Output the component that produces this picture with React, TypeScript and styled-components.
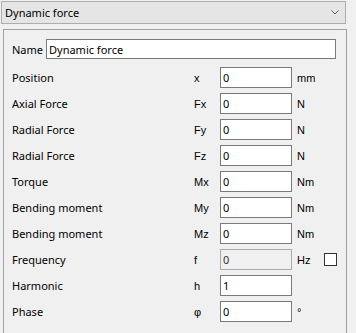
import React from "react";
import styled, { createGlobalStyle } from "styled-components";

const GlobalStyle = createGlobalStyle`
  html, body {
    margin: 0;
    padding: 0;
    background: #f0f0f0;
  }
  body {
    font-family: "Noto Sans", "Liberation Sans", sans-serif;
    font-size: 11px;
    color: #000;
  }
`;

const Page = styled.div`
  width: 356px;
  height: 333px;
  overflow: hidden;
  padding: 1px 0 0 1px;
  box-sizing: border-box;
`;

const Combo = styled.div`
  width: 345px;
  height: 23px;
  box-sizing: border-box;
  border: 1px solid #adadad;
  background: #e5e5e5;
  display: flex;
  align-items: center;
  justify-content: space-between;
  padding: 0 6px 0 3px;
`;

const Panel = styled.div`
  margin: 5px 0 0 2px;
  width: 344px;
  height: 320px;
  box-sizing: border-box;
  border: 1px solid #a0a0a0;
  padding: 9px 9px 0 8px;
`;

const NameRow = styled.div`
  display: flex;
  align-items: center;
  margin-bottom: 8px;
`;

const NameLabel = styled.span`
  width: 34px;
`;

const Field = styled.input<{ $w: number }>`
  width: ${(p) => p.$w}px;
  height: ${(p) => (p.$w > 100 ? 20 : 21)}px;
  box-sizing: border-box;
  border: 1px solid #7a7a7a;
  background: #fff;
  font-family: "Noto Sans", "Liberation Sans", sans-serif;
  font-size: 11px;
  color: #000;
  padding: 0 2px;
  margin: 0;
  outline: none;
  &:disabled {
    background: #f0f0f0;
    border-color: #a9a9a9;
    color: #333;
  }
`;

const Grid = styled.div`
  display: grid;
  grid-template-columns: 182px 26px 72px 5px 27px 13px;
  grid-auto-rows: 21px;
  row-gap: 5px;
  align-items: center;
`;

const Label = styled.span`
  grid-column: 1;
`;

const Sym = styled.span`
  grid-column: 2;
  font-family: "Liberation Sans", Arial, sans-serif;
  font-size: 11px;
`;

const Unit = styled.span`
  grid-column: 5;
  font-family: "Liberation Sans", Arial, sans-serif;
  font-size: 11px;
`;

const Check = styled.span`
  grid-column: 6;
  width: 13px;
  height: 13px;
  box-sizing: border-box;
  border: 1px solid #333;
  background: #fff;
`;

const Chevron = () => (
  <svg width="8" height="5" viewBox="0 0 8 5">
    <path d="M0.5 0.5 L4 4 L7.5 0.5" fill="none" stroke="#606060" strokeWidth="1" />
  </svg>
);

const rows = [
  { label: "Position", sym: "x", value: "0", unit: "mm" },
  { label: "Axial Force", sym: "Fx", value: "0", unit: "N" },
  { label: "Radial Force", sym: "Fy", value: "0", unit: "N" },
  { label: "Radial Force", sym: "Fz", value: "0", unit: "N" },
  { label: "Torque", sym: "Mx", value: "0", unit: "Nm" },
  { label: "Bending moment", sym: "My", value: "0", unit: "Nm" },
  { label: "Bending moment", sym: "Mz", value: "0", unit: "Nm" },
  { label: "Frequency", sym: "f", value: "0", unit: "Hz", disabled: true, check: true },
  { label: "Harmonic", sym: "h", value: "1", unit: "" },
  { label: "Phase", sym: "φ", value: "0", unit: "°" },
];

const App = () => {
  return (
    <Page>
      <GlobalStyle />
      <Combo>
        <span>Dynamic force</span>
        <Chevron />
      </Combo>
      <Panel>
        <NameRow>
          <NameLabel>Name</NameLabel>
          <Field $w={290} defaultValue="Dynamic force" />
        </NameRow>
        <Grid>
          {rows.map((r, i) => (
            <React.Fragment key={i}>
              <Label>{r.label}</Label>
              <Sym>{r.sym}</Sym>
              <Field $w={72} style={{ gridColumn: 3 }} defaultValue={r.value} disabled={r.disabled} />
              <Unit>{r.unit}</Unit>
              {r.check && <Check />}
            </React.Fragment>
          ))}
        </Grid>
      </Panel>
    </Page>
  );
};

export default App;
